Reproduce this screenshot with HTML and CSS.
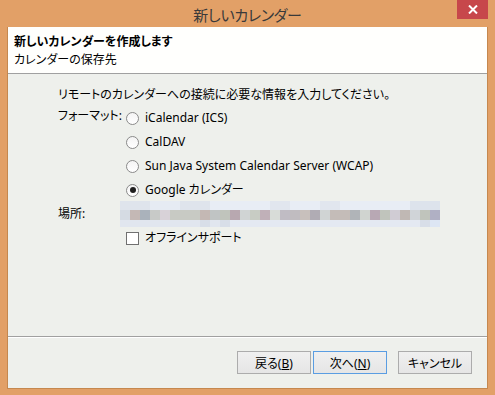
FILE: index.html
```html
<!DOCTYPE html>
<html lang="ja">
<head>
  <meta charset="UTF-8" />
  <title>新しいカレンダー</title>
  <link rel="stylesheet" href="styles.css">
</head>
<body>
  <div class="window">
    <div class="titlebar">
      <span class="title">新しいカレンダー</span>
      <button class="close" aria-label="閉じる">
        <svg width="10" height="9" viewBox="0 0 10 9"><path d="M1 0.5 L9 8.5 M9 0.5 L1 8.5" stroke="#fff" stroke-width="2"/></svg>
      </button>
    </div>

    <div class="client">
      <div class="header">
        <div class="h-title">新しいカレンダーを作成します</div>
        <div class="h-sub">カレンダーの保存先</div>
      </div>

      <div class="page">
        <p class="intro">リモートのカレンダーへの接続に必要な情報を入力してください。</p>

        <div class="form">
          <span class="field-label">フォーマット:</span>
          <div class="options">
            <label class="opt"><span class="radio"></span>iCalendar (ICS)</label>
            <label class="opt"><span class="radio"></span>CalDAV</label>
            <label class="opt"><span class="radio"></span>Sun Java System Calendar Server (WCAP)</label>
            <label class="opt"><span class="radio checked"></span>Google カレンダー</label>
          </div>

          <span class="field-label loc-label">場所:</span>
          <div class="location">
            <div class="px-top"></div>
            <div class="px-mid"></div>
            <div class="px-bot"></div>
          </div>

          <span></span>
          <label class="opt check-row"><span class="checkbox"></span>オフラインサポート</label>
        </div>
      </div>

      <div class="footer">
        <button class="btn back">戻る(<u>B</u>)</button>
        <button class="btn next">次へ(<u>N</u>)</button>
        <button class="btn cancel">キャンセル</button>
      </div>
    </div>
  </div>
</body>
</html>
```

FILE: styles.css
```css
body {
  margin: 0;
  font-family: "Noto Sans", "Noto Sans CJK JP", sans-serif;
  font-size: 12px;
  font-feature-settings: "palt";
  color: #000;
}

.window {
  width: 495px;
  height: 395px;
  background-color: #e2a067;
  display: flex;
  flex-direction: column;
  position: relative;
}

.titlebar {
  height: 27px;
  display: flex;
  align-items: center;
  justify-content: center;
}

.title {
  font-size: 15px;
  color: #3a3a3a;
  margin-top: 1px;
  letter-spacing: -0.3px;
}

.close {
  position: absolute;
  top: 0;
  right: 7px;
  width: 31px;
  height: 19px;
  border: none;
  padding: 0;
  background-color: #c7474b;
  display: flex;
  align-items: center;
  justify-content: center;
}

.client {
  flex: 1;
  margin: 0 7px 6px 7px;
  border: 1px solid #c5884f;
  border-top: none;
  background-color: #eef0ec;
  display: flex;
  flex-direction: column;
}

.header {
  background-color: #fffffd;
  padding: 6px 6px 4px;
  border-bottom: 1px solid #a0a0a0;
  line-height: 18px;
}

.h-title {
  font-weight: bold;
}

.page {
  flex: 1;
  padding: 12px 0 0 50px;
  line-height: 18px;
}

.intro {
  margin: 0;
}

.form {
  display: grid;
  grid-template-columns: 62px 1fr;
  margin-top: 3px;
}

.field-label {
  line-height: 18px;
  white-space: nowrap;
}

.options {
  display: flex;
  flex-direction: column;
  gap: 2px;
}

.opt {
  height: 22px;
  display: flex;
  align-items: center;
  gap: 6px;
  padding-left: 6px;
  white-space: nowrap;
}

.radio {
  width: 11px;
  height: 11px;
  border: 1px solid #8a8a8a;
  border-radius: 50%;
  background: linear-gradient(#f4f4f4, #fff);
  display: flex;
  align-items: center;
  justify-content: center;
}

.radio.checked::after {
  content: "";
  width: 6px;
  height: 6px;
  border-radius: 50%;
  background-color: #1e1e1e;
}

.checkbox {
  width: 11px;
  height: 11px;
  border: 1px solid #707070;
  background-color: #fff;
}

.loc-label {
  line-height: 26px;
}

.location {
  width: 320px;
  height: 26px;
  display: flex;
  flex-direction: column;
}

.px-top {
  height: 9px;
  background: linear-gradient(90deg,
    #dfe4ec 0 30px, #e6ebf3 30px 60px, #dfe4ec 60px 90px, #e8edf5 90px 150px,
    #e1e6ee 150px 170px, #e8edf5 170px 200px, #e1e6ee 200px 220px, #e8edf5 220px 290px,
    #dde3ec 290px 320px);
}

.px-mid {
  height: 10px;
  background: linear-gradient(90deg,
    #d5dbe3 0 10px, #c4b8b5 10px 20px, #aab2bb 20px 30px, #c8cac8 30px 40px,
    #d8d2d8 40px 50px, #c8cac4 50px 80px, #c4b8b4 80px 90px, #c0c4c4 90px 100px,
    #c0c4bc 100px 110px, #b8a8b0 110px 120px, #d0d4d4 120px 130px, #c8ccc4 130px 140px,
    #c0b0b8 140px 150px, #d8dcd8 150px 160px, #c0bcc4 160px 170px, #c0bcc0 170px 180px,
    #c8c0bc 180px 190px, #b0acb4 190px 200px, #d0d4d4 200px 210px, #c4bcb8 210px 230px,
    #b0b4b8 230px 240px, #d0d4d0 240px 250px, #b8a8b4 250px 260px, #c0c4bc 260px 270px,
    #d0ccd4 270px 280px, #c0b8b4 280px 290px, #d0d4d8 290px 300px, #c0c4bc 300px 310px,
    #b0b0c4 310px 320px);
}

.px-bot {
  height: 7px;
  background: linear-gradient(90deg,
    #e1e6ef 0 80px, #d8dee8 80px 90px, #e1e6ef 90px 100px, #d8dee8 100px 110px,
    #e4e9f2 110px 300px, #d8dee8 300px 310px, #dde6f4 310px 320px);
}

.check-row {
  height: 20px;
  margin-top: 1px;
}

.footer {
  border-top: 1px solid #a0a0a0;
  box-shadow: inset 0 1px #fff;
  padding: 14px 15px 14px 0;
  display: flex;
  justify-content: flex-end;
}

.btn {
  width: 74px;
  height: 23px;
  padding: 0;
  border: 1px solid #acacac;
  background: linear-gradient(#f0f0f0, #e5e5e5);
  font-family: inherit;
  font-size: 12px;
  font-feature-settings: "palt";
  color: #000;
}

.btn.next {
  margin-left: 2px;
  border-color: #5a9de2;
}

.btn.cancel {
  margin-left: 11px;
}
```
